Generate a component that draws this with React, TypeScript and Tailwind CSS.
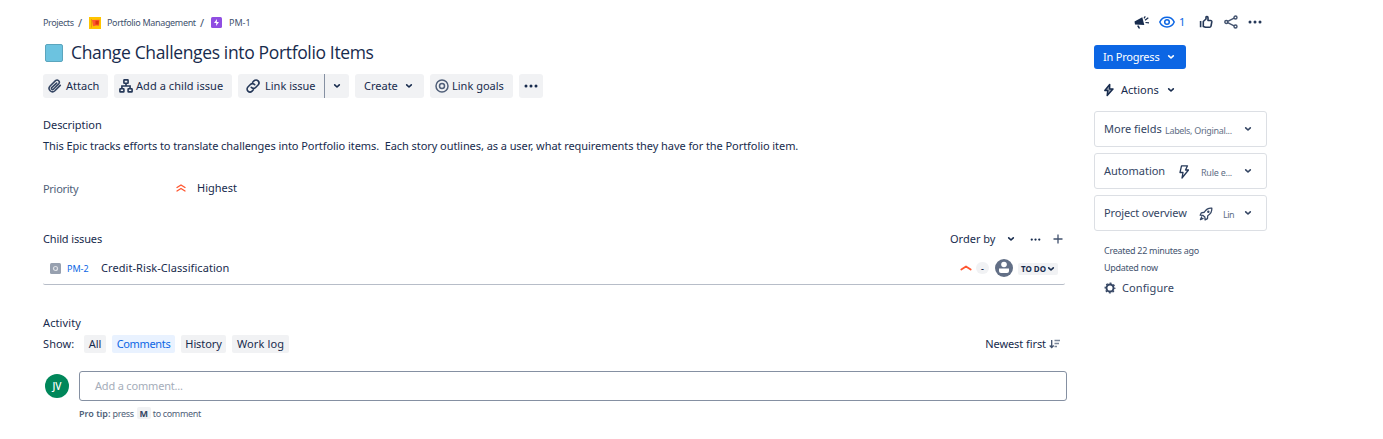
import React from 'react';

const Text = ({ className = '', children }: { className?: string; children: React.ReactNode }) => (
  <span className={`block pb-0.5 whitespace-nowrap ${className}`}>{children}</span>
);

const Chevron = ({ className = '' }: { className?: string }) => (
  <svg viewBox="0 0 8 8" className={`h-2 w-2 shrink-0 ${className}`} fill="none" stroke="currentColor" strokeWidth="1.6" strokeLinecap="round" strokeLinejoin="round">
    <path d="M1.7 2.8 4 5 6.300 2.8" />
  </svg>
);

const Dots = ({ className = '' }: { className?: string }) => (
  <svg viewBox="0 0 14 4" className={`shrink-0 ${className}`} fill="currentColor">
    <circle cx="2" cy="2" r="1.500" />
    <circle cx="7" cy="2" r="1.500" />
    <circle cx="12" cy="2" r="1.500" />
  </svg>
);

const Clip = () => (
  <svg viewBox="0 0 24 24" className="ml-0.5 h-3.5 w-3.5 shrink-0 text-[#344563]" fill="none" stroke="currentColor" strokeWidth="2.700" strokeLinecap="round">
    <path d="m21 11-9.2 9.2a5.8 5.8 0 0 1-8.2-8.2l9.3-9.2a3.9 3.9 0 0 1 5.5 5.5l-9.2 9.2a1.9 1.9 0 0 1-2.8-2.7L14.800 7" />
  </svg>
);

const Tree = () => (
  <svg viewBox="0 0 14 14" className="h-3.5 w-3.5 shrink-0 text-[#253858]" fill="none" stroke="currentColor" strokeWidth="1.600">
    <rect x="4.900" y="0.900" width="4.200" height="3.400" rx="0.5" />
    <rect x="0.900" y="9.700" width="4" height="3.200" rx="0.5" />
    <rect x="9.100" y="9.700" width="4" height="3.200" rx="0.5" />
    <path d="M7 4.300V7M2.900 9.700V7h8.200v2.700" />
  </svg>
);

const LinkIcon = () => (
  <svg viewBox="0 0 24 24" className="mr-px ml-px h-3.5 w-3.5 shrink-0 text-[#253858]" fill="none" stroke="currentColor" strokeWidth="2.700" strokeLinecap="round">
    <path d="M9 14.200a5 5 0 0 0 7.500.4l4.200-4.200a5 5 0 0 0-7.100-7.100l-2.200 2.200" />
    <path d="M15 9.800a5 5 0 0 0-7.500-.4l-4.200 4.200a5 5 0 0 0 7.100 7.100l2.200-2.200" />
  </svg>
);

const Target = () => (
  <svg viewBox="0 0 14 14" className="h-3.5 w-3.5 shrink-0 text-[#505f79]" fill="none" stroke="currentColor" strokeWidth="1.500">
    <circle cx="7" cy="7" r="6" />
    <circle cx="7" cy="7" r="2.500" />
  </svg>
);

const Bolt = () => (
  <svg viewBox="0 0 12 14" className="h-3.5 w-3 shrink-0 text-[#172b4d]" fill="none" stroke="currentColor" strokeWidth="1.500" strokeLinejoin="round">
    <path d="M6.700 1.500 1.800 7.400h3l-.6 5.100 5.800-6.400H6.600z" fill="currentColor" fillOpacity="0.450" />
  </svg>
);

const Header = () => (
  <div className="flex h-5 items-center text-[9px] text-[#42526e]">
    <span className="w-[31px] tracking-[-0.38px] whitespace-nowrap">Projects</span>
    <span className="ml-1 w-[11px] text-[11px]">/</span>
    <svg viewBox="0 0 12 12" className="mt-0.5 h-3 w-3">
      <rect width="12" height="12" fill="#ffc400" />
      <path d="M3 3 10.500 2.800 10 8.800 7 8.400 4 9.200z" fill="#ff5630" />
      <path d="M6.500 3.800h3.300L9.500 7.500 6.500 7.500z" fill="#de350b" />
      <path d="M2.500 2v8.500" stroke="#e08a00" strokeWidth="0.700" />
    </svg>
    <span className="ml-1.5 w-[89px] tracking-[-0.34px] whitespace-nowrap">Portfolio Management</span>
    <span className="ml-1 w-[11px] text-[11px]">/</span>
    <svg viewBox="0 0 11 11" className="h-[11px] w-[11px]">
      <rect width="11" height="11" rx="1.500" fill="#904ee2" />
      <path d="M6 2 3 6h2.300L5 9l3-4H5.800z" fill="white" />
    </svg>
    <span className="ml-[7px] whitespace-nowrap">PM-1</span>
  </div>
);

const button = 'flex h-6 items-center rounded-[3px] bg-[#f1f2f4] whitespace-nowrap';

const Toolbar = () => (
  <div className="flex">
    <div className={`${button} w-[65px] pl-[3px]`}>
      <Clip />
      <Text className="ml-1">Attach</Text>
    </div>
    <div className={`${button} ml-1.5 w-[118px] pl-[5px]`}>
      <Tree />
      <Text className="ml-[3px] tracking-[0.06px]">Add a child issue</Text>
    </div>
    <div className={`${button} ml-1.5 w-[111px] pl-[7px]`}>
      <LinkIcon />
      <Text className="ml-1 w-[59px]">Link issue</Text>
      <span className="h-6 w-px bg-[#8590a2]" />
      <Chevron className="ml-2" />
    </div>
    <div className={`${button} ml-1.5 w-[69px] pl-[9px]`}>
      <Text className="w-[41px]">Create</Text>
      <Chevron />
    </div>
    <div className={`${button} ml-1.5 w-[83px] pl-[5px]`}>
      <Target />
      <Text className="ml-[3px]">Link goals</Text>
    </div>
    <div className={`${button} ml-1.5 w-6 justify-center`}>
      <Dots className="h-1 w-3.5" />
    </div>
  </div>
);

const ChildIssues = () => (
  <section className="mt-[31px]">
    <div className="flex h-5 items-center">
      <h2 className="pb-0.5 tracking-[-0.14px]">Child issues</h2>
      <Text className="ml-auto w-[57px]">Order by</Text>
      <Chevron />
      <Dots className="ml-[15px] h-[3px] w-[11px]" />
      <svg viewBox="0 0 10 10" className="mr-1 ml-3 h-2.5 w-2.5" stroke="#42526e" strokeWidth="1.300">
        <path d="M5 0.500v9M0.500 5h9" />
      </svg>
    </div>
    <div className="mt-[3px] flex h-[33px] w-[1022px] items-center rounded-[2px] border-b border-[#b7bdc8] pl-[7px]">
      <svg viewBox="0 0 11 11" className="mt-px h-[11px] w-[11px]">
        <rect width="11" height="11" rx="1.500" fill="#97a0af" />
        <circle cx="5.500" cy="5.500" r="2" fill="none" stroke="#dfe1e6" strokeWidth="1.200" />
      </svg>
      <span className="ml-1.5 w-[34px] pt-px text-[9px] whitespace-nowrap text-[#0c66e4]">PM-2</span>
      <Text className="tracking-[0.07px]">Credit-Risk-Classification</Text>
      <svg viewBox="0 0 12 6" className="ml-auto h-1.5 w-3" fill="none" stroke="#ff5630" strokeWidth="1.800" strokeLinecap="round" strokeLinejoin="round">
        <path d="M1.300 4.500 6 1.500l4.700 3" />
      </svg>
      <span className="ml-1 flex h-3 w-[13px] items-center justify-center rounded-full bg-[#f1f2f4] text-[9px] font-semibold">-</span>
      <svg viewBox="0 0 18 18" className="ml-1.5 h-[18px] w-[18px]">
        <circle cx="9" cy="9" r="9" fill="#626f86" />
        <circle cx="9" cy="5.500" r="2.800" fill="white" />
        <path d="M4 9.500h10v2.500a2 2 0 0 1-2 2H6a2 2 0 0 1-2-2z" fill="white" />
      </svg>
      <span className="mt-px mr-[7px] ml-[5px] flex h-3 w-10 items-center rounded-[2px] bg-[#f1f2f4] pl-[3px] text-[8px] font-bold whitespace-nowrap">
        <span className="w-[26px]">TO DO</span>
        <Chevron />
      </span>
    </div>
  </section>
);

const tab = 'flex h-[18px] items-center justify-center rounded-[2px] whitespace-nowrap';

const Activity = () => (
  <section className="mt-7">
    <h2 className="flex h-5 items-center pb-0.5 tracking-[0.1px]">Activity</h2>
    <div className="mt-0.5 flex h-[18px] items-center">
      <Text className="w-[41px] tracking-[0.1px]">Show:</Text>
      <span className={`${tab} w-[22px] bg-[#f1f2f4]`}>
        <Text>All</Text>
      </span>
      <span className={`${tab} ml-1.5 w-[63px] bg-[#e9f2ff] text-[#0c66e4]`}>
        <Text className="tracking-[-0.35px]">Comments</Text>
      </span>
      <span className={`${tab} ml-1.5 w-[45px] bg-[#f1f2f4]`}>
        <Text className="tracking-[-0.1px]">History</Text>
      </span>
      <span className={`${tab} ml-1.5 w-[57px] bg-[#f1f2f4]`}>
        <Text className="tracking-[0.1px]">Work log</Text>
      </span>
      <Text className="ml-auto tracking-[-0.08px]">Newest first</Text>
      <svg viewBox="0 0 11 10" className="mr-[7px] ml-[3px] h-2.5 w-[11px]" fill="none" stroke="#42526e" strokeWidth="1.300">
        <path d="M2.700 1v7.500M.7 6.500l2 2 2-2" />
        <path d="M5.500 1.500H11M5.500 4.500H10M5.500 7.500H8" stroke="#7a869a" />
      </svg>
    </div>
    <div className="mt-[18px] flex items-center">
      <span className="ml-0.5 flex h-6 w-6 items-center justify-center rounded-full bg-[#00875a] text-[10px] font-medium text-white">JV</span>
      <div className="ml-2.5 flex h-[30px] w-[988px] items-center rounded-[3px] border border-[#8590a2] pl-[15px] text-[#a5adba]">
        <Text className="tracking-[-0.18px]">Add a comment...</Text>
      </div>
    </div>
    <div className="mt-0.5 ml-9 flex h-5 items-center text-[9px] whitespace-nowrap text-[#505f79]">
      <b className="font-semibold">Pro tip:</b>
      <span className="ml-0.5 tracking-[-0.3px]">press</span>
      <b className="mr-0.5 ml-[3px] flex h-3 w-[14px] items-center justify-center rounded-[2px] bg-[#f1f2f4] text-[#344563]">M</b>
      <span className="tracking-[-0.34px]">to comment</span>
    </div>
  </section>
);

const panel = 'flex h-9 w-[173px] items-center rounded-[3px] border border-[#dcdfe4] pl-[9px] whitespace-nowrap text-[#344563]';

const Sidebar = () => (
  <aside className="ml-[27px] w-[173px] pt-3">
    <div className="flex h-5 items-center text-[#253858]">
      <svg viewBox="0 0 16 14" className="ml-10 h-3.5 w-4 text-[#172b4d]" fill="currentColor">
        <path d="M0.500 6.500 8.300 2.200l2 7.800-9.300-.6zM3 10.800 4.800 10.500l1.400 3H4.600z" />
        <path d="M10 3.300 11.300 1.300M11 5.300l3.300-2.500M11.500 7.500l3.500.3" stroke="currentColor" strokeWidth="1.200" />
      </svg>
      <svg viewBox="0 0 16 12" className="ml-[9px] h-3 w-4 text-[#0c66e4]" fill="none" stroke="currentColor" strokeWidth="1.500">
        <path d="M.8 6C3.500-.5 12.500-.5 15.200 6 12.500 12.500 3.500 12.500.8 6z" />
        <circle cx="8" cy="6" r="2.300" />
      </svg>
      <Text className="ml-1 w-5 text-[#0c66e4]">1</Text>
      <svg viewBox="0 0 14 14" className="h-3.5 w-3.5" fill="none" stroke="currentColor" strokeWidth="1.600" strokeLinejoin="round">
        <path d="M4.300 6.500 7 4V2.300c0-1.200 2-1.100 2 .4V5.500h2.500c1 0 1.400.6 1.300 1.400l-.8 4.200c-.2.800-.6 1.200-1.400 1.200H6.500l-2.200-.8zM1.600 6v6.300" />
      </svg>
      <svg viewBox="0 0 14 14" className="ml-[11px] h-3.5 w-3.5 text-[#42526e]" fill="none" stroke="currentColor" strokeWidth="1.400">
        <circle cx="2.300" cy="7" r="1.500" />
        <circle cx="11.500" cy="2.500" r="1.500" />
        <circle cx="11.500" cy="11.500" r="1.500" />
        <path d="m3.700 6.300 6.400-3.100M3.700 7.700l6.400 3.100" />
      </svg>
      <Dots className="ml-2.5 h-1 w-3.5" />
    </div>
    <div className="mt-[13px] flex h-6 w-[92px] items-center rounded-[3px] bg-[#0c66e4] pl-[9px] text-white">
      <Text className="w-16 tracking-[-0.22px]">In Progress</Text>
      <Chevron />
    </div>
    <div className="mt-[11px] flex h-5 items-center pl-[9px]">
      <Bolt />
      <Text className="ml-1.5 w-[46px]">Actions</Text>
      <Chevron />
    </div>
    <div className="mt-[11px] flex flex-col gap-1.5">
      <div className={panel}>
        <Text className="w-[61px]">More fields</Text>
        <span className="mt-0.5 w-[79px] tracking-[-0.32px] text-[9px] text-[#626f86]">Labels, Original...</span>
        <Chevron />
      </div>
      <div className={panel}>
        <Text className="w-[75px]">Automation</Text>
        <svg viewBox="0 0 10 14" className="mt-0.5 h-3.5 w-2.5" fill="none" stroke="#253858" strokeWidth="1.300" strokeLinejoin="round">
          <path d="M2.500.8h6L6.500 5h3L3 13l1-5.500H1z" />
        </svg>
        <span className="mt-0.5 ml-3 w-[43px] tracking-[-0.25px] text-[9px] text-[#626f86]">Rule e...</span>
        <Chevron />
      </div>
      <div className={panel}>
        <Text className="w-[95px] tracking-[-0.12px]">Project overview</Text>
        <svg viewBox="0 0 24 24" className="mt-0.5 h-3.5 w-3.5" fill="none" stroke="#344563" strokeWidth="2.200" strokeLinejoin="round" strokeLinecap="round">
          <path d="M22 2c-6-.5-10 2-13 7L4 10l-2 4 5 .5L10 17l.5 5 4-2 .5-5c5-3 7.500-7 7-13zM4.500 17 2.500 21.500 7 19.500" />
          <circle cx="16" cy="8" r="1" />
        </svg>
        <span className="mt-0.5 ml-2.5 w-[21px] tracking-[-0.5px] text-[9px] text-[#626f86]">Lin</span>
        <Chevron />
      </div>
    </div>
    <div className="mt-[11px] pl-2.5 text-[9px] tracking-[-0.28px] text-[#44546f]">
      <div className="flex h-[17px] items-center">Created 22 minutes ago</div>
      <div className="flex h-[17px] items-center">Updated now</div>
    </div>
    <div className="mt-0.5 flex h-5 items-center pl-2.5 text-[#344563]">
      <svg viewBox="0 0 12 12" className="mb-px h-3 w-3" fill="none" stroke="currentColor">
        <circle cx="6" cy="6" r="3.500" strokeWidth="1.900" />
        <circle cx="6" cy="6" r="4.800" strokeWidth="1.300" strokeDasharray="1.885 1.885" strokeDashoffset="0.940" />
      </svg>
      <Text className="ml-1.5 tracking-[0.1px]">Configure</Text>
    </div>
  </aside>
);

export default function App() {
  return (
    <main className="flex h-[439px] w-[1383px] overflow-hidden bg-white pl-[43px] font-['Noto_Sans','Open_Sans',sans-serif] text-[11px] leading-none text-[#172b4d]">
      <div className="w-[1024px] pt-3">
        <Header />
        <div className="flex h-[42px] items-center">
          <span className="ml-0.5 h-[18px] w-[18px] rounded-[2px] border border-[#5ba5bd] bg-[#6cc3e0]" />
          <h1 className="ml-2 pb-px font-['Open_Sans','Noto_Sans',sans-serif] text-[17.500px] tracking-[-0.35px] whitespace-nowrap">Change Challenges into Portfolio Items</h1>
        </div>
        <Toolbar />
        <h2 className="mt-[17px] flex h-5 items-center pb-0.5 tracking-[-0.05px]">Description</h2>
        <p className="mt-px flex h-5 items-center pb-0.5 tracking-[-0.066px] whitespace-pre">This Epic tracks efforts to translate challenges into Portfolio items.  Each story outlines, as a user, what requirements they have for the Portfolio item.</p>
        <div className="mt-[22px] flex h-5 items-center">
          <span className="w-[133px] tracking-[-0.3px] text-[#505f79]">Priority</span>
          <svg viewBox="0 0 10 8" className="h-2 w-2.5" fill="none" stroke="#ff5630" strokeWidth="1.400" strokeLinecap="round" strokeLinejoin="round">
            <path d="M1 3.500 5 1l4 2.500M1 7 5 4.500 9 7" />
          </svg>
          <Text className="ml-[11px]">Highest</Text>
        </div>
        <ChildIssues />
        <Activity />
      </div>
      <Sidebar />
    </main>
  );
}
